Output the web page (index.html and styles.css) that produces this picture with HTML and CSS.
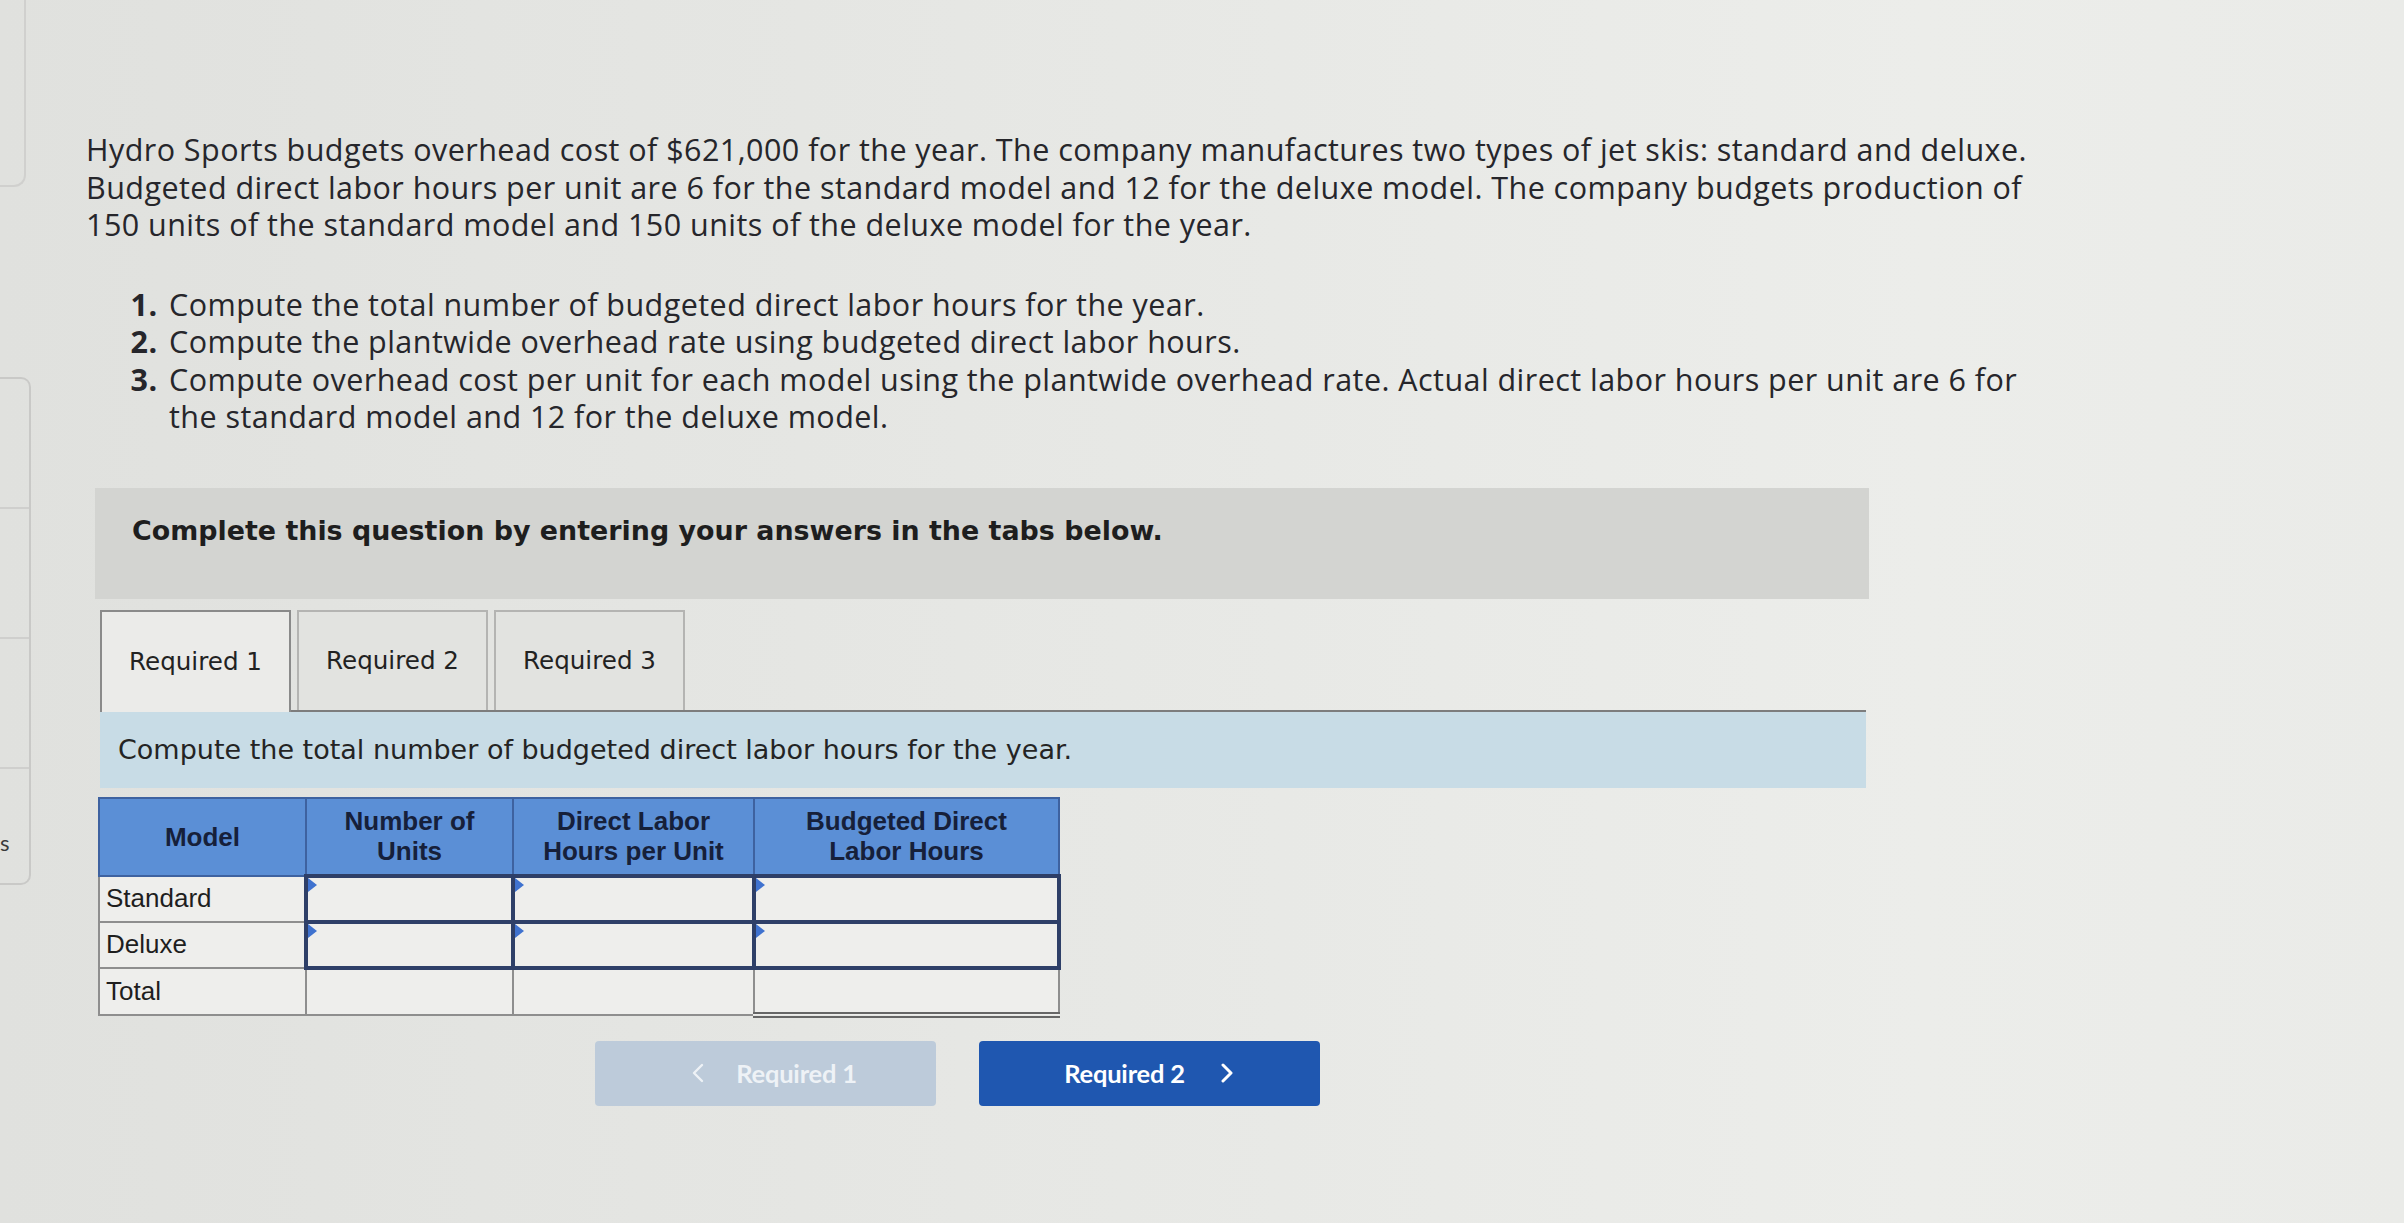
FILE: index.html
```html
<!DOCTYPE html>
<html lang="en">
<head>
<meta charset="utf-8">
<title>Hydro Sports</title>
<link rel="stylesheet" href="styles.css">
</head>
<body>
<div class="shell">
  <aside class="rail">
    <div class="panel-top"></div>
    <div class="panel-list">
      <div class="pl-item"></div>
      <div class="pl-item"></div>
      <div class="pl-item"></div>
      <div class="pl-item last"><span class="pl-label">s</span></div>
    </div>
  </aside>
  <main class="main">
    <p class="intro">Hydro Sports budgets overhead cost of $621,000 for the year. The company manufactures two types of jet skis: standard and deluxe.<br>Budgeted direct labor hours per unit are 6 for the standard model and 12 for the deluxe model. The company budgets production of<br>150 units of the standard model and 150 units of the deluxe model for the year.</p>
    <ol class="tasks">
      <li>Compute the total number of budgeted direct labor hours for the year.</li>
      <li>Compute the plantwide overhead rate using budgeted direct labor hours.</li>
      <li>Compute overhead cost per unit for each model using the plantwide overhead rate. Actual direct labor hours per unit are 6 for<br>the standard model and 12 for the deluxe model.</li>
    </ol>
    <div class="notice">Complete this question by entering your answers in the tabs below.</div>
    <div class="tabs">
      <div class="tab active">Required 1</div>
      <div class="tab">Required 2</div>
      <div class="tab">Required 3</div>
    </div>
    <div class="instruction">Compute the total number of budgeted direct labor hours for the year.</div>
    <table class="grid">
      <colgroup>
        <col class="c1"><col class="c2"><col class="c3"><col class="c4">
      </colgroup>
      <thead>
        <tr>
          <th>Model</th>
          <th>Number of<br>Units</th>
          <th>Direct Labor<br>Hours per Unit</th>
          <th>Budgeted Direct<br>Labor Hours</th>
        </tr>
      </thead>
      <tbody>
        <tr>
          <td class="label">Standard</td>
          <td class="in"></td>
          <td class="in"></td>
          <td class="in"></td>
        </tr>
        <tr>
          <td class="label">Deluxe</td>
          <td class="in"></td>
          <td class="in"></td>
          <td class="in"></td>
        </tr>
        <tr>
          <td class="label">Total</td>
          <td></td>
          <td></td>
          <td class="dbl"></td>
        </tr>
      </tbody>
    </table>
    <div class="nav">
      <button class="btn prev" type="button">
        <svg class="chev" viewBox="0 0 12 20" width="12" height="20"><polyline points="10,2 2,10 10,18" fill="none" stroke="currentColor" stroke-width="2.4" stroke-linecap="round" stroke-linejoin="round"/></svg>
        <span>Required 1</span>
      </button>
      <button class="btn next" type="button">
        <span>Required 2</span>
        <svg class="chev" viewBox="0 0 12 20" width="12" height="20"><polyline points="2,2 10,10 2,18" fill="none" stroke="currentColor" stroke-width="3" stroke-linecap="round" stroke-linejoin="round"/></svg>
      </button>
    </div>
  </main>
</div>
</body>
</html>
```
FILE: styles.css
```css
html, body {
  margin: 0;
  padding: 0;
}
body {
  width: 2404px;
  height: 1223px;
  overflow: hidden;
  background: linear-gradient(90deg, #e0e1de 0%, #e6e7e4 40%, #ecedea 80%, #eaebe8 100%);
  font-family: "Open Sans", "Lato", sans-serif;
  color: #26262b;
}
.shell {
  display: flex;
  align-items: flex-start;
}
.rail {
  width: 33px;
  flex-shrink: 0;
  display: flex;
  flex-direction: column;
}
.panel-top {
  width: 26px;
  height: 187px;
  box-sizing: border-box;
  border-right: 2px solid #d0d0ce;
  border-bottom: 2px solid #d0d0ce;
  border-bottom-right-radius: 12px;
}
.panel-list {
  margin-top: 190px;
  width: 31px;
  height: 508px;
  box-sizing: border-box;
  border: 2px solid #c9c9c7;
  border-left: none;
  border-radius: 0 10px 10px 0;
  display: flex;
  flex-direction: column;
  overflow: hidden;
}
.pl-item {
  height: 128px;
  flex-shrink: 0;
  border-bottom: 2px solid #cfcfcd;
}
.pl-item.last {
  flex: 1;
  border-bottom: none;
  display: flex;
  align-items: flex-start;
  padding-top: 62px;
}
.pl-label {
  font-family: "Lato", sans-serif;
  font-size: 22px;
  line-height: 24px;
  color: #3a3a3a;
}
.main {
  padding-left: 53px;
  padding-top: 131px;
  flex: 1;
}
.intro {
  margin: 0;
  font-size: 30.5px;
  line-height: 37.5px;
  letter-spacing: 0.45px;
  white-space: nowrap;
}
.tasks {
  margin: 42px 0 0 0;
  padding-left: 80px;
  font-size: 30.5px;
  line-height: 37.5px;
  letter-spacing: 0.45px;
  white-space: nowrap;
}
.tasks li::marker {
  font-weight: 700;
}
.tasks li {
  padding-left: 3px;
}
.notice {
  margin: 52px 0 0 9px;
  width: 1774px;
  height: 111px;
  box-sizing: border-box;
  background: #d3d4d1;
  padding: 27px 0 0 37px;
  font-family: "DejaVu Sans", Verdana, sans-serif;
  font-weight: 700;
  font-size: 26.9px;
  line-height: 32px;
  color: #1e1e1e;
}
.tabs {
  margin: 11px 0 0 14px;
  width: 1766px;
  display: flex;
  gap: 6px;
  border-bottom: 2px solid #7d7d7d;
}
.tab {
  width: 191px;
  height: 100px;
  box-sizing: border-box;
  border: 2px solid #b4b4b2;
  border-bottom: none;
  background: #e2e3e0;
  display: flex;
  align-items: center;
  justify-content: center;
  font-family: "DejaVu Sans", Verdana, sans-serif;
  font-size: 24.6px;
  color: #222;
}
.tab.active {
  background: #ebebe9;
  border-color: #8a8a8a;
  margin-bottom: -2px;
  height: 102px;
}
.instruction {
  margin-left: 14px;
  width: 1766px;
  height: 76px;
  box-sizing: border-box;
  background: #c8dce6;
  padding-left: 18px;
  display: flex;
  align-items: center;
  font-family: "DejaVu Sans", Verdana, sans-serif;
  font-size: 27px;
  color: #242424;
}
.grid {
  margin: 9px 0 0 12px;
  border-collapse: collapse;
  width: 960px;
  table-layout: fixed;
  font-family: "Liberation Sans", Arial, sans-serif;
  font-size: 26px;
}
.c1 { width: 207px; }
.c2 { width: 207px; }
.c3 { width: 241px; }
.c4 { width: 305px; }
.grid th {
  height: 75px;
  background: #5b8fd6;
  border: 2px solid #3e62a0;
  font-weight: 700;
  line-height: 30px;
  color: #16203a;
  padding: 0;
}
.grid td {
  height: 42px;
  border: 2px solid #8e8e8e;
  background: #eeeeec;
  padding: 0;
}
.grid td.label {
  padding-left: 6px;
  color: #1e1e1e;
}
.grid td.in {
  border: 4px solid #2e3f68;
  position: relative;
}
.grid td.in::before {
  content: "";
  position: absolute;
  left: 0;
  top: 0;
  border-left: 9px solid #3f72cf;
  border-top: 7px solid transparent;
  border-bottom: 7px solid transparent;
}
.grid td.dbl {
  border-bottom: 6px double #666;
}
.nav {
  margin-top: 23px;
  width: 1783px;
  padding-right: 40px;
  box-sizing: border-box;
  display: flex;
  justify-content: center;
  gap: 43px;
}
.btn {
  width: 341px;
  height: 65px;
  border: none;
  border-radius: 4px;
  display: flex;
  align-items: center;
  justify-content: center;
  font-family: "Lato", "Open Sans", sans-serif;
  font-weight: 700;
  font-size: 25.5px;
  letter-spacing: -0.2px;
  padding: 0;
}
.btn.prev {
  background: #bdcbda;
  color: #eef2f6;
  gap: 32px;
  padding-left: 18px;
}
.btn.next {
  background: #1f57b0;
  color: #ffffff;
  gap: 36px;
  padding-right: 2px;
}
.chev {
  display: block;
}
```
